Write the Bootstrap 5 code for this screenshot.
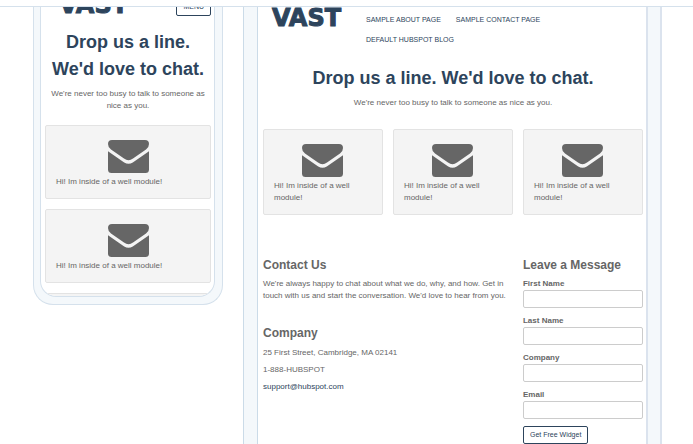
<!DOCTYPE html>
<html lang="en">
<head>
<meta charset="utf-8">
<meta name="viewport" content="width=device-width, initial-scale=1">
<title>Contact page preview</title>
<link href="https://cdn.jsdelivr.net/npm/bootstrap@5.3.0/dist/css/bootstrap.min.css" rel="stylesheet">
<style>
  body { font-family: "Liberation Sans", Arial, sans-serif; font-size: 8px; line-height: 12px; color: #666; background: #fff; }
  .preview-page { height: 100vh; }
  .top-strip { height: 7px; border-bottom: 1px solid #d5e1ec; background: #fff; }
  .stage { grid-template-columns: 190fr 419fr; grid-template-rows: minmax(0, 1fr); padding: 0 31px 0 33px; gap: 20px; min-height: 0; }
  .device { background: #f4f8fb; border: 1px solid #d5e1ec; border-top: 0; min-width: 0; }
  .device-phone { border-radius: 0 0 20px 20px; padding: 0 7px 7px 6px; align-self: start; }
  .device-desktop { padding: 0 12px 0 13px; border-color: #cbdbe8; border-right: 2px solid #dbe3ee; border-bottom: 0; }
  .screen { background: #fff; border: 1px solid #d5e1ec; border-top: 0; overflow: hidden; }
  .device-phone .screen { height: 290px; border-radius: 0 0 16px 16px; padding: 0 3px 0 4px; }
  .device-desktop .screen { height: 100%; padding: 0 3px 0 5px; border-color: #cbdbe8; border-right: 2px solid #dbe3ee; border-bottom: 0; }
  .wordmark { font-family: "DejaVu Sans", sans-serif; font-weight: 700; font-size: 24px; line-height: 22px; color: #2d445c; -webkit-text-stroke: 1px #2d445c; text-decoration: none; width: 87px; text-align: center; }
  .phone-head { height: 23px; margin-top: -14px; padding-left: 5px; }
  .menu-btn { font-size: 7px; line-height: 10px; padding: 3px 6px; border: 1px solid #2d445c; border-radius: 2px; color: #2d445c; background: #fff; }
  .phone-hero { padding-top: 13px; }
  .hero-title { font-size: 18px; line-height: 27px; font-weight: 700; color: #2d445c; margin: 0; }
  .well-box { background: #f4f4f4; border: 1px solid #e3e3e3; border-radius: 2px; padding: 14px 10px 10px; }
  .well-box svg { width: 41px; height: 33px; display: block; margin: 0 auto 3px; fill: #666; }
  .phone-wells { gap: 10px; margin-top: 13px; }
  .phone-hero p { padding-top: 5px; }
  .desk-nav { gap: 8px 15px; padding-top: 7px; }
  .desk-nav a { font-size: 7px; line-height: 12px; color: #2d445c; text-decoration: none; }
  .desk-grid { --bs-gutter-x: 10px; }
  .hero-desk { margin-top: 19px; }
  .hero-desk p { padding-top: 5px; }
  .wells-desk { margin-top: 20px; }
  .details { margin-top: 41px; }
  .section-title { font-size: 12px; line-height: 18px; font-weight: 700; margin: 0 0 4px; }
  .company-title { margin: 22px 0 5px; }
  .details p { margin: 0 0 5px; }
  .details a { color: #2d445c; text-decoration: none; }
  .field label { display: block; font-weight: 700; }
  .field .form-control { height: 18px; min-height: 0; padding: 2px 4px; font-size: 8px; line-height: 12px; border: 1px solid #ccc; border-radius: 2px; margin-bottom: 7px; }
  .send-btn { font-size: 7px; line-height: 10px; padding: 3px 6px; border: 1px solid #2d445c; border-radius: 2px; color: #2d445c; background: #fff; }
</style>
</head>
<body>
<svg class="d-none" aria-hidden="true">
  <symbol id="envelope" viewBox="0 0 41 33">
    <path d="M4 0H37Q41 0 41 4Q41 7.500 38 9.600L25 18.600Q20.500 22 16 18.600L3 9.600Q0 7.500 0 4Q0 0 4 0Z"/>
    <path d="M0 11.200L16.200 22.400Q20.500 25 24.800 22.400L41 11.200V29.500Q41 33 37.500 33H3.500Q0 33 0 29.500Z"/>
  </symbol>
</svg>
<div class="preview-page d-flex flex-column overflow-hidden">
  <div class="top-strip flex-shrink-0"></div>
  <main class="stage d-grid flex-fill">
    <section class="device device-phone" aria-label="Phone preview">
      <div class="screen">
        <div class="phone-head d-flex justify-content-between align-items-end">
          <a class="wordmark" href="#">VAST</a>
          <button type="button" class="menu-btn">MENU</button>
        </div>
        <div class="phone-hero text-center">
          <h2 class="hero-title">Drop us a line. We'd love to chat.</h2>
          <p class="m-0">We're never too busy to talk to someone as nice as you.</p>
        </div>
        <div class="phone-wells d-flex flex-column">
          <div class="well-box"><svg aria-hidden="true"><use href="#envelope"/></svg>Hi! Im inside of a well module!</div>
          <div class="well-box"><svg aria-hidden="true"><use href="#envelope"/></svg>Hi! Im inside of a well module!</div>
          <div class="well-box"></div>
        </div>
      </div>
    </section>
    <section class="device device-desktop" aria-label="Desktop preview">
      <div class="screen">
        <header class="d-flex align-items-start">
          <a class="wordmark flex-shrink-0" href="#">VAST</a>
          <nav class="desk-nav d-flex flex-wrap ps-3">
            <a href="#">SAMPLE ABOUT PAGE</a>
            <a href="#">SAMPLE CONTACT PAGE</a>
            <a href="#">DEFAULT HUBSPOT BLOG</a>
          </nav>
        </header>
        <div class="hero-desk text-center">
          <h1 class="hero-title">Drop us a line. We'd love to chat.</h1>
          <p class="m-0">We're never too busy to talk to someone as nice as you.</p>
        </div>
        <div class="row desk-grid wells-desk">
          <div class="col-4"><div class="well-box"><svg aria-hidden="true"><use href="#envelope"/></svg>Hi! Im inside of a well module!</div></div>
          <div class="col-4"><div class="well-box"><svg aria-hidden="true"><use href="#envelope"/></svg>Hi! Im inside of a well module!</div></div>
          <div class="col-4"><div class="well-box"><svg aria-hidden="true"><use href="#envelope"/></svg>Hi! Im inside of a well module!</div></div>
        </div>
        <div class="row desk-grid details">
          <div class="col-8">
            <h2 class="section-title">Contact Us</h2>
            <p>We're always happy to chat about what we do, why, and how. Get in touch with us and start the conversation. We'd love to hear from you.</p>
            <h2 class="section-title company-title">Company</h2>
            <p>25 First Street, Cambridge, MA 02141</p>
            <p>1-888-HUBSPOT</p>
            <p><a href="mailto:support@hubspot.com">support@hubspot.com</a></p>
          </div>
          <div class="col-4">
            <h2 class="section-title">Leave a Message</h2>
            <form>
              <div class="field"><label for="first">First Name</label><input id="first" class="form-control" type="text"></div>
              <div class="field"><label for="last">Last Name</label><input id="last" class="form-control" type="text"></div>
              <div class="field"><label for="company">Company</label><input id="company" class="form-control" type="text"></div>
              <div class="field"><label for="email">Email</label><input id="email" class="form-control" type="email"></div>
              <button type="button" class="send-btn">Get Free Widget</button>
            </form>
          </div>
        </div>
      </div>
    </section>
  </main>
</div>
<script src="https://cdn.jsdelivr.net/npm/bootstrap@5.3.0/dist/js/bootstrap.bundle.min.js"></script>
</body>
</html>
